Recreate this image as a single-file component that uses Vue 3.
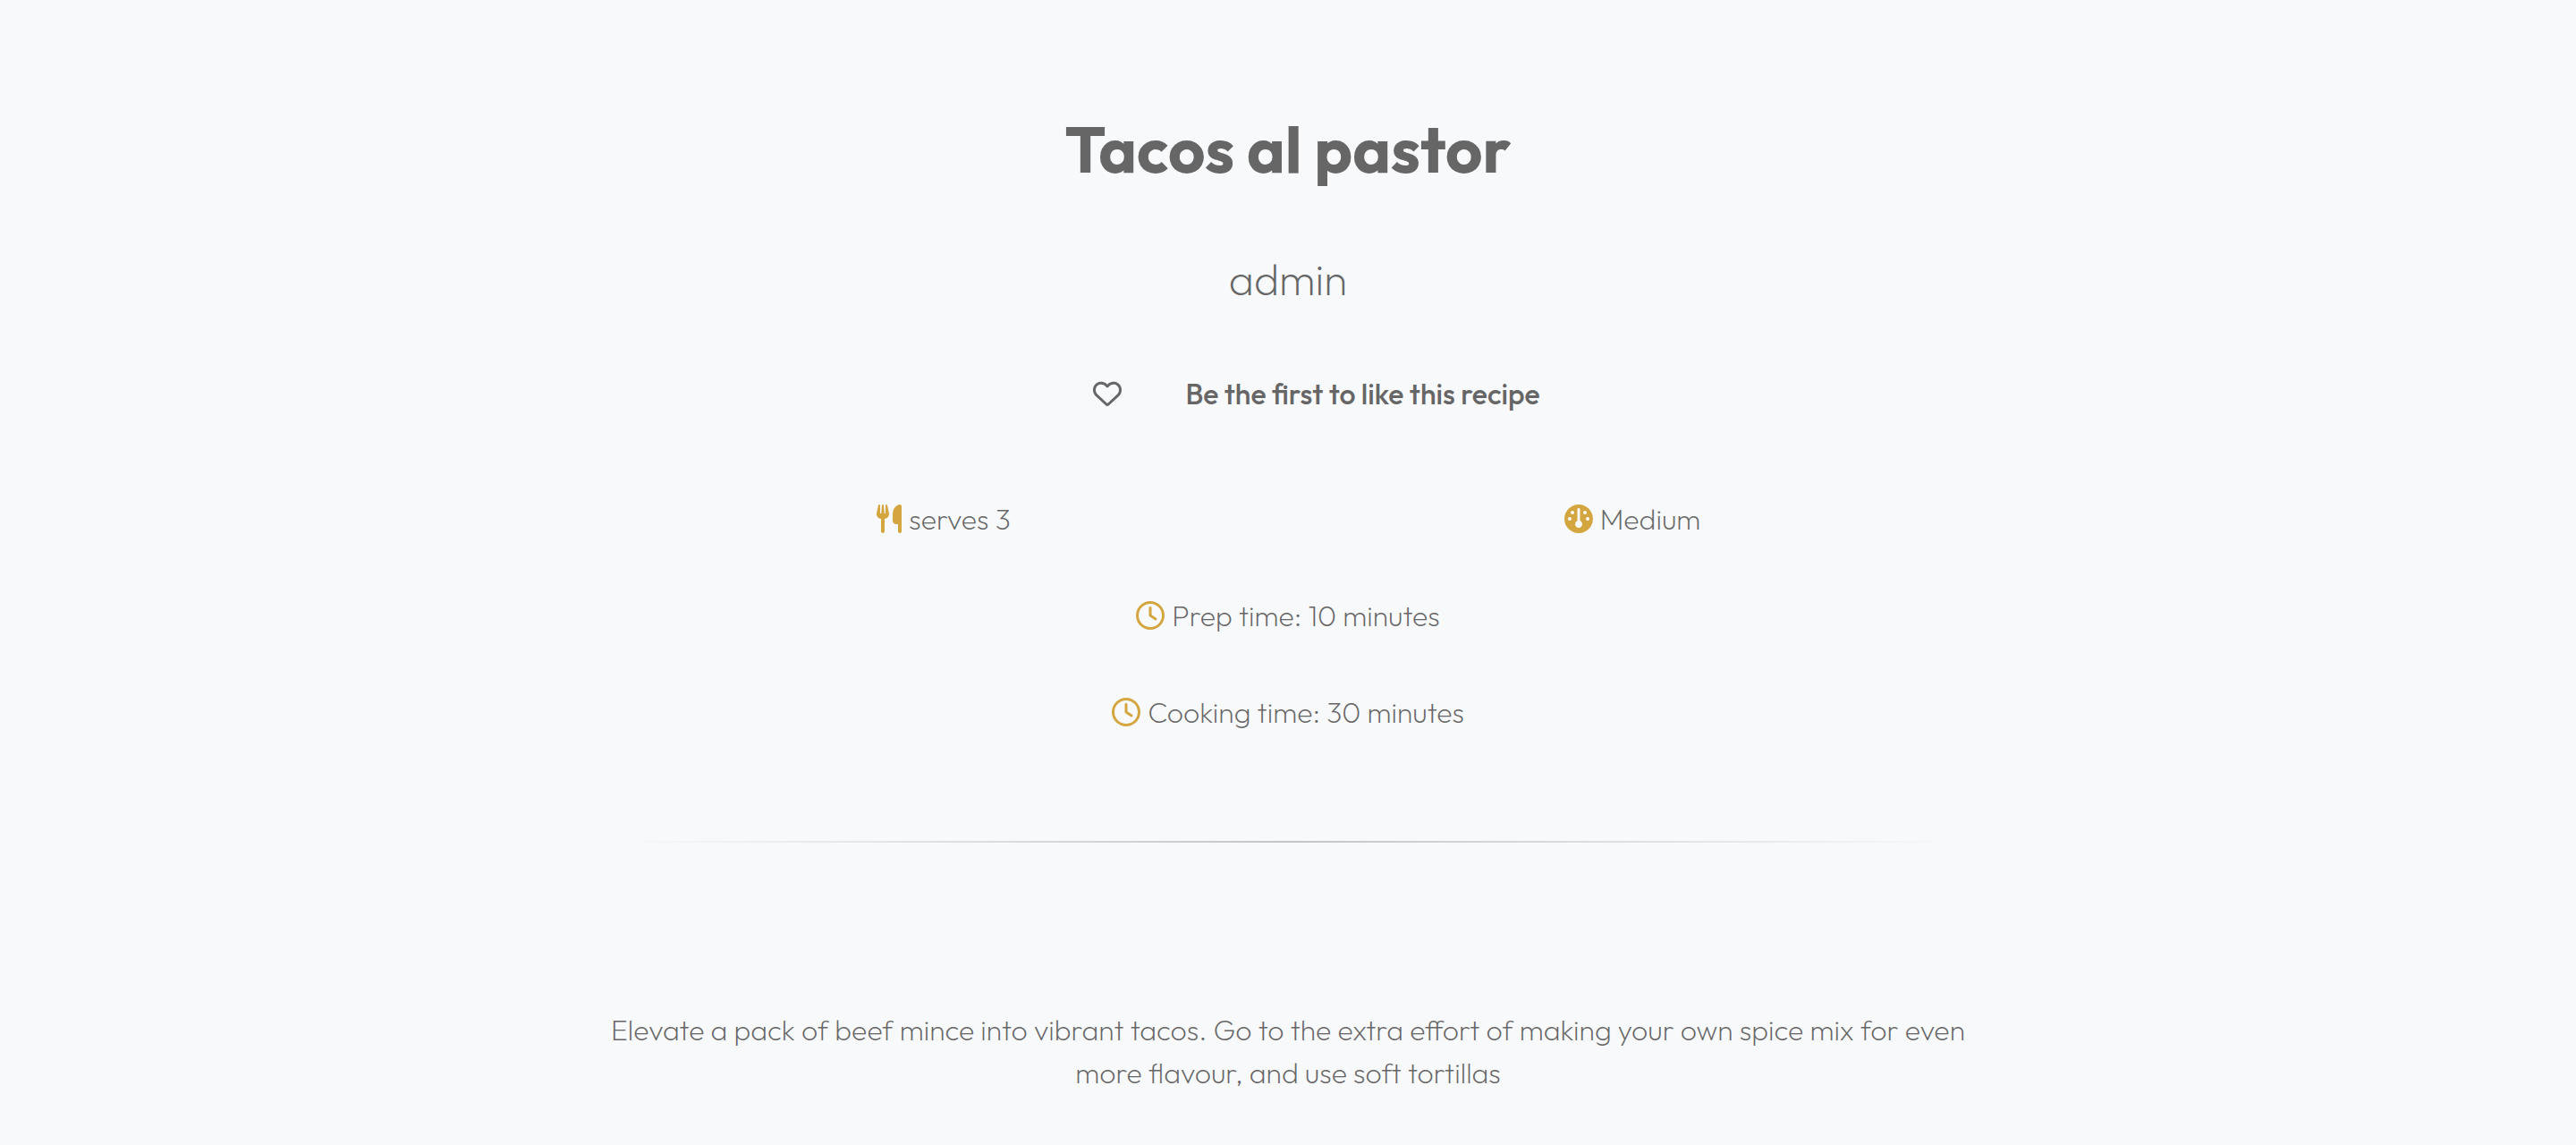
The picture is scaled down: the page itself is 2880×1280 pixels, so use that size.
<script setup>
const times = [
  { label: 'Prep time', minutes: 10 },
  { label: 'Cooking time', minutes: 30 },
]
</script>

<template>
  <main class="recipe">
    <header class="intro">
      <h1>Tacos al pastor</h1>
      <p class="author">admin</p>
      <div class="likes">
        <button type="button" class="like" aria-label="Like this recipe">
          <svg class="icon" viewBox="0 0 512 512" aria-hidden="true">
            <path d="M225.8 468.2l-2.5-2.3L48.1 303.2C17.4 274.7 0 234.7 0 192.8v-3.3c0-70.4 50-130.8 119.2-144C158.6 37.9 198.9 47 231 69.6c9 6.4 17.4 13.8 25 22.3c4.2-4.8 8.7-9.2 13.5-13.3c3.7-3.2 7.5-6.2 11.5-9C313.1 47 353.4 37.9 392.8 45.4C462 58.6 512 119.1 512 189.5v3.3c0 41.9-17.4 81.9-48.1 110.4L288.7 465.9l-2.5 2.3c-8.2 7.6-19 11.9-30.2 11.9s-22-4.2-30.2-11.9zM239.1 145c-.4-.3-.7-.7-1-1.1l-17.8-20c-23.1-25.9-58-37.7-92-31.2C81.6 101.5 48 142.1 48 189.5v3.3c0 28.5 11.9 55.8 32.8 75.2L256 430.7 431.2 268c20.9-19.4 32.8-46.7 32.8-75.2v-3.3c0-47.3-33.6-88-80.1-96.9c-34-6.5-69 5.4-92 31.2l-17.8 20c-.3 .4-.7 .7-1 1.1c-4.5 4.5-10.6 7-16.9 7s-12.4-2.5-16.9-7z" />
          </svg>
        </button>
        <p>Be the first to like this recipe</p>
      </div>
    </header>

    <section class="facts">
      <p class="fact">
        <svg class="icon narrow" viewBox="0 0 448 512" aria-hidden="true">
          <path d="M416 0C400 0 288 32 288 176V288c0 35.3 28.7 64 64 64h32V480c0 17.7 14.3 32 32 32s32-14.3 32-32V352 240 32c0-17.7-14.3-32-32-32zM64 16C64 7.8 57.9 1 49.7 .1S34.2 4.6 32.4 12.5L2.1 148.8C.7 155.1 0 161.5 0 167.9c0 45.9 35.1 83.6 80 87.7V480c0 17.7 14.3 32 32 32s32-14.3 32-32V255.6c44.9-4.1 80-41.8 80-87.7c0-6.4-.7-12.8-2.1-19.1L191.6 12.5c-1.8-8-9.3-13.3-17.4-12.4S160 7.8 160 16V150.2c0 5.4-4.4 9.8-9.8 9.8c-5.1 0-9.3-3.9-9.8-9L127.9 14.6C127.2 6.3 120.3 0 112 0s-15.2 6.3-15.9 14.6L83.7 151c-.5 5.1-4.7 9-9.8 9c-5.4 0-9.8-4.4-9.8-9.8V16z" />
        </svg>
        <span>serves 3</span>
      </p>
      <p class="fact">
        <svg class="icon" viewBox="0 0 512 512" aria-hidden="true">
          <path d="M0 256a256 256 0 1 1 512 0A256 256 0 1 1 0 256zm320 96c0-26.9-16.5-49.9-40-59.3V88c0-13.3-10.7-24-24-24s-24 10.7-24 24V292.7c-23.5 9.5-40 32.5-40 59.3c0 35.3 28.7 64 64 64s64-28.7 64-64zM144 176a32 32 0 1 0 0-64 32 32 0 1 0 0 64zm-16 80a32 32 0 1 0 -64 0 32 32 0 1 0 64 0zm288 32a32 32 0 1 0 0-64 32 32 0 1 0 0 64zM400 144a32 32 0 1 0 -64 0 32 32 0 1 0 64 0z" />
        </svg>
        <span>Medium</span>
      </p>
      <p v-for="time in times" :key="time.label" class="fact wide">
        <svg class="icon" viewBox="0 0 512 512" aria-hidden="true">
          <path d="M464 256A208 208 0 1 1 48 256a208 208 0 1 1 416 0zM0 256a256 256 0 1 0 512 0A256 256 0 1 0 0 256zM232 120V256c0 8 4 15.5 10.7 20l96 64c11 7.4 25.9 4.4 33.3-6.7s4.4-25.9-6.7-33.3L280 243.2V120c0-13.3-10.7-24-24-24s-24 10.7-24 24z" />
        </svg>
        <span>{{ time.label }}: {{ time.minutes }} minutes</span>
      </p>
    </section>

    <hr />

    <p class="description">
      Elevate a pack of beef mince into vibrant tacos. Go to the extra effort of making your own spice mix for even more flavour, and use soft tortillas
    </p>
  </main>
</template>

<style>
body {
  background: #f8f9fb;
}
</style>

<style scoped>
.recipe {
  box-sizing: border-box;
  max-width: 1540px;
  margin: 0 auto;
  padding: 119px 0 40px;
  color: #666;
  font-family: Outfit, Lato, sans-serif;
  font-size: 32px;
  font-weight: 200;
  line-height: 48px;
  text-align: center;
}

h1,
p {
  margin: 0;
}

h1 {
  font-size: 72px;
  font-weight: 700;
  line-height: 96px;
}

.author {
  margin-top: 61px;
  font-size: 48px;
  line-height: 72px;
}

.likes {
  display: flex;
  justify-content: center;
  gap: 71px;
  margin: 68px 0 0 64px;
  font-weight: 500;
}

.like {
  display: flex;
  align-items: center;
  padding: 0;
  border: 0;
  background: none;
  color: inherit;
  cursor: pointer;
}

.icon {
  width: 32px;
  height: 32px;
  flex: none;
  fill: currentColor;
}

.narrow {
  width: 28px;
}

.facts {
  display: grid;
  grid-template-columns: 1fr 1fr;
  row-gap: 60px;
  margin-top: 92px;
}

.fact {
  display: flex;
  align-items: center;
  justify-content: center;
  gap: 8px;
}

.fact .icon {
  color: #d4a640;
}

.wide {
  grid-column: 1 / -1;
}

hr {
  height: 2px;
  margin: 120px 24px 185px;
  border: 0;
  background: linear-gradient(to right, transparent, #c4c5c5, transparent);
}
</style>
